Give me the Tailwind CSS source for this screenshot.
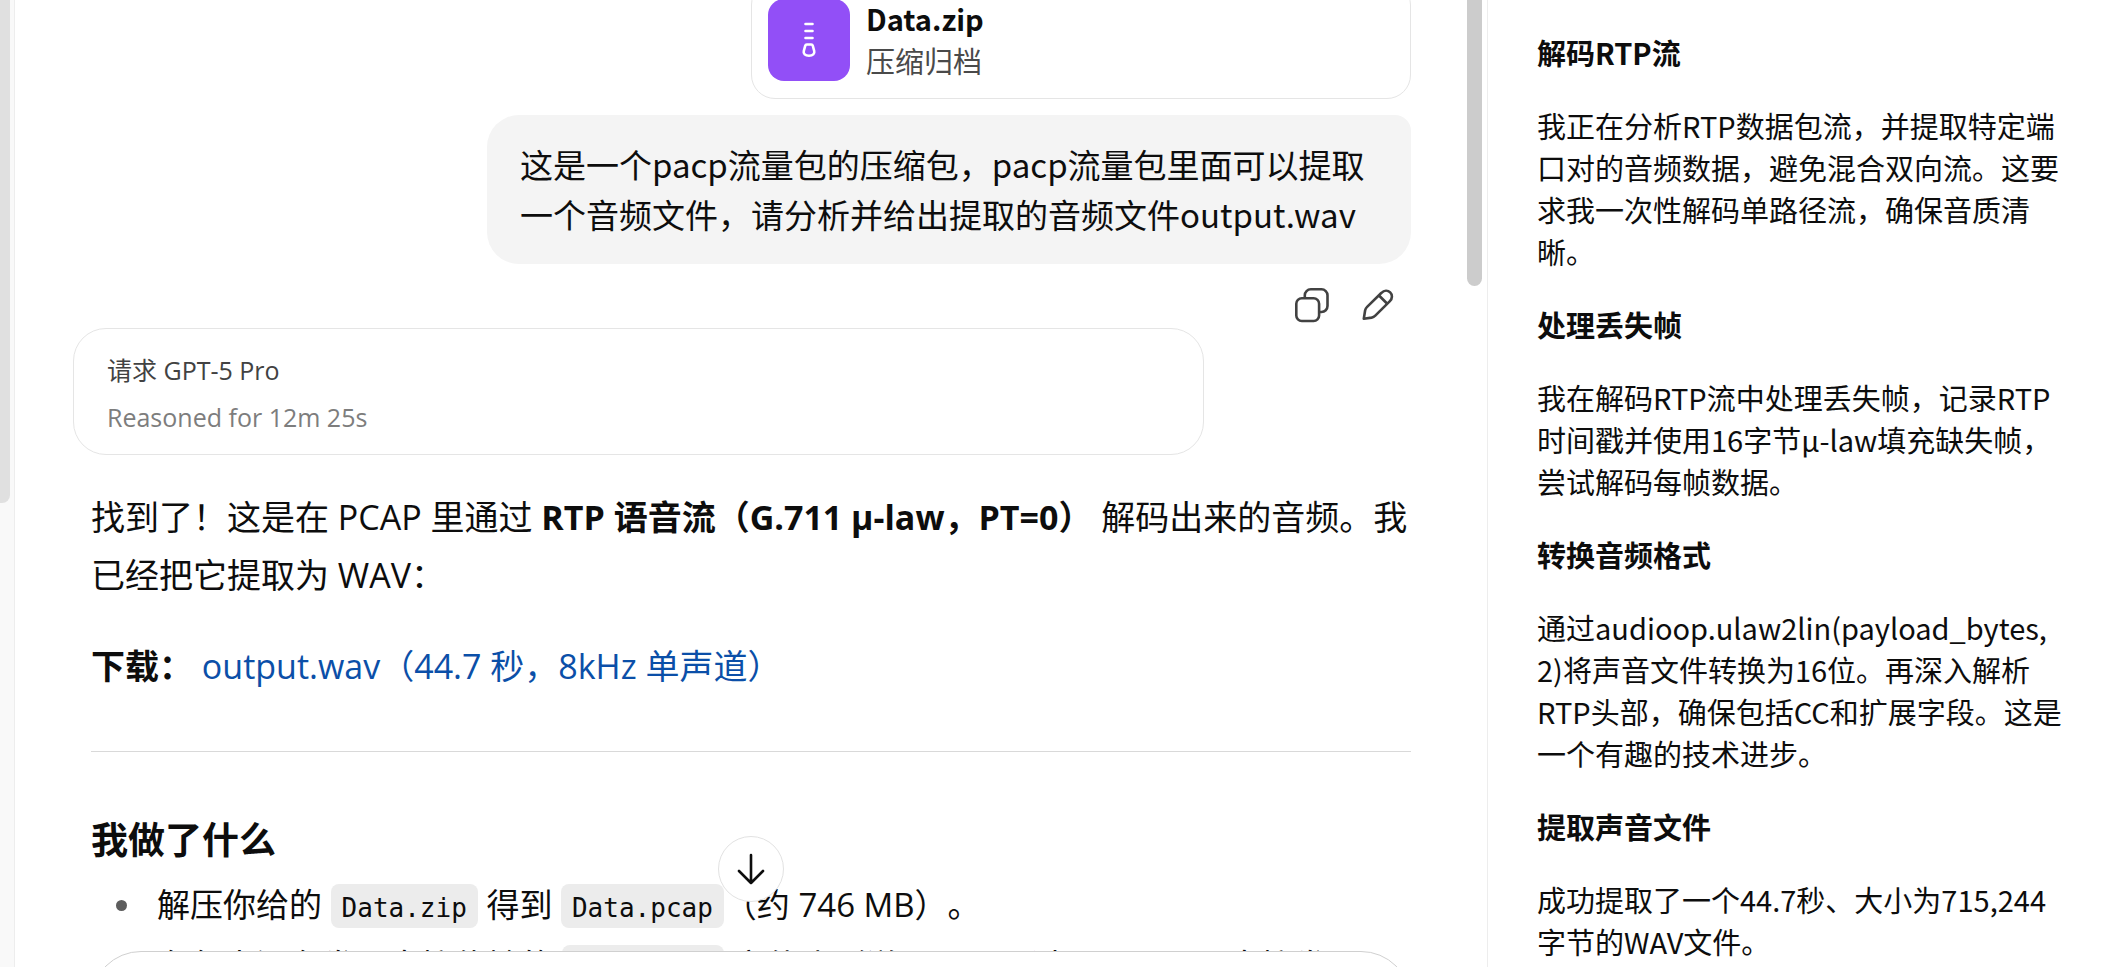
<!DOCTYPE html>
<html lang="zh-CN">
<head>
  <meta charset="UTF-8">
  <meta name="viewport" content="width=device-width, initial-scale=1">
  <title>RTP 音频提取</title>
  <script src="https://cdn.jsdelivr.net/npm/@tailwindcss/browser@4"></script>
</head>
<body class="h-screen overflow-hidden bg-white text-[#0d0d0d] font-['Noto_Sans_CJK_SC',sans-serif] [text-spacing-trim:space-all]">

  <div class="flex h-full">

    <!-- sidebar edge -->
    <div class="w-[15px] shrink-0 bg-[#f9f9f9] border-r border-[#ededed]">
      <div class="w-[10px] h-[503px] bg-[#e0e0e0] rounded-br-lg"></div>
    </div>

    <!-- conversation -->
    <main class="relative flex-1 min-w-0 flex overflow-hidden">
      <div class="flex-1 min-w-0 pl-[76px] pr-14 -mt-[19px]">

        <div class="flex flex-col items-end">
          <div class="flex items-center gap-4 w-1/2 h-[118px] px-4 border border-[#e5e5e5] rounded-3xl">
            <div class="w-[82px] h-[82px] shrink-0 rounded-2xl bg-[#924ff7] flex items-center justify-center">
              <svg class="w-10 h-10" viewBox="0 0 40 40" fill="none" stroke="white" stroke-width="2.6" stroke-linecap="round">
                <path d="M16.5 4h7M16.5 11h7M16.5 18h7"/>
                <path d="M17.8 24.500h4.400c.8 0 1.400.5 1.600 1.300l1.400 5.200c.7 2.700-1.300 4.800-5.200 4.800s-5.900-2.100-5.200-4.800l1.400-5.200c.2-.8.8-1.300 1.600-1.300z"/>
              </svg>
            </div>
            <div class="pb-[3px] text-[29px] leading-[42px]">
              <div class="font-bold">Data.zip</div>
              <div class="text-[#4a4a4a]">压缩归档</div>
            </div>
          </div>

          <div class="mt-4 w-[70%] pt-6 pb-[25px] px-[33px] bg-[#f4f4f4] rounded-[32px] rounded-tr-2xl text-[33px] leading-[50px]">
            这是一个pacp流量包的压缩包，pacp流量包里面可以提取一个音频文件，请分析并给出提取的音频文件output.wav
          </div>

          <div class="flex mt-[18px] text-[#424242]">
            <button type="button" aria-label="复制" class="w-[66px] h-[46px] flex items-center justify-center">
              <svg class="w-10 h-10" viewBox="0 0 40 40" fill="none" stroke="currentColor" stroke-width="2.6" stroke-linejoin="round">
                <rect x="4.3" y="13.2" width="22.800" height="22.800" rx="5.500"/>
                <path d="M12.800 13v-2.700a6 6 0 0 1 6-6h10.700a6 6 0 0 1 6 6v10.700a6 6 0 0 1-6 6h-2.300"/>
              </svg>
            </button>
            <button type="button" aria-label="编辑" class="w-[66px] h-[46px] flex items-center justify-center">
              <svg class="w-10 h-10" viewBox="0 0 40 40" fill="none" stroke="currentColor" stroke-width="2.6" stroke-linejoin="round">
                <path d="M23.500 7.800c2.600-2.600 6.300-2.700 8.700-.4s2.300 6.100-.3 8.700L17.300 30.600a7 7 0 0 1-3.700 2L5.800 33.800l1.300-8.300a7 7 0 0 1 2-3.600z"/>
                <path d="M21 10.500l8.500 8.500"/>
              </svg>
            </button>
          </div>
        </div>

        <div class="-ml-[18px] mr-[207px] h-[127px] pt-[18px] px-[33px] border border-[#e5e5e5] rounded-[33px] font-['Open_Sans','Noto_Sans_CJK_SC',sans-serif] text-[25px]">
          <div class="text-[#424242] leading-[47px]">请求 GPT-5 Pro</div>
          <div class="text-[#7d7d7d] leading-[47px]">Reasoned for 12m 25s</div>
        </div>

        <article class="mt-[33px] font-['Open_Sans','Noto_Sans_CJK_SC',sans-serif] text-[33px] leading-[58px]">
          <p class="text-[34px] leading-[58px]">找到了！这是在 PCAP 里通过 <strong>RTP 语音流（G.711 µ-law，PT=0）</strong> 解码出来的音频。我已经把它提取为 WAV：</p>
          <p class="mt-[33px] text-[34px] leading-[58px]"><strong>下载：</strong> <a href="#" class="text-[#0b4fa8]">output.wav（44.7 秒，8kHz 单声道）</a></p>
          <hr class="mt-14 border-[#d9d9d9]">
          <h2 class="mt-[65px] text-[37px] leading-[46px] font-bold">我做了什么</h2>
          <ul class="mt-[13px] pl-[66px]">
            <li class="relative">
              <span class="absolute -left-[41px] top-6 size-[11px] rounded-full bg-[#5d5d5d]"></span>
              解压你给的 <code class="px-[11px] pt-[9px] pb-[5px] bg-[#ececec] rounded-lg font-['DejaVu_Sans_Mono',monospace] text-[26px]">Data.zip</code> 得到 <code class="px-[11px] pt-[9px] pb-[5px] bg-[#ececec] rounded-lg font-['DejaVu_Sans_Mono',monospace] text-[26px]">Data.pcap</code>（约 746 MB）。
            </li>
            <li class="relative whitespace-nowrap">
              <span class="absolute -left-[41px] top-6 size-[11px] rounded-full bg-[#5d5d5d]"></span>
              在包中没有发现直接传输的 <code class="px-[11px] pt-[9px] pb-[5px] bg-[#ececec] rounded-lg font-['DejaVu_Sans_Mono',monospace] text-[26px]">RIFF/WAVE</code> 文件头（说明不是通过 HTTP/FTP 直接发
            </li>
          </ul>
        </article>
      </div>

      <!-- scrollbar -->
      <div class="w-5 shrink-0">
        <div class="w-[15px] h-[286px] bg-[#ccc] rounded-b-full"></div>
      </div>

      <button type="button" aria-label="滚动到底部" class="absolute left-[703px] bottom-[65px] size-[66px] rounded-full border border-[#e2e2e2] bg-white flex items-center justify-center">
        <svg class="w-10 h-10" viewBox="0 0 40 40" fill="none" stroke="currentColor" stroke-width="2.6" stroke-linecap="round" stroke-linejoin="round">
          <path d="M20 6v28M8 22L20 34l12-12"/>
        </svg>
      </button>

      <!-- composer, mostly below the fold -->
      <form class="absolute left-[76px] right-[76px] top-full -mt-4">
        <textarea aria-label="询问任何问题" class="block w-full h-28 px-8 resize-none border border-[#d0d0d0] rounded-[50px] bg-white outline-none"></textarea>
      </form>
    </main>

    <!-- reasoning panel -->
    <aside class="w-[626px] shrink-0 pt-[31px] pl-[49px] pr-[50px] border-l border-[#ededed] text-[29px] leading-[42px] overflow-hidden">
      <div class="flex flex-col gap-[31px]">
        <h3 class="font-bold">解码RTP流</h3>
        <p>我正在分析RTP数据包流，并提取特定端口对的音频数据，避免混合双向流。这要求我一次性解码单路径流，确保音质清晰。</p>
        <h3 class="font-bold">处理丢失帧</h3>
        <p>我在解码RTP流中处理丢失帧，记录RTP时间戳并使用16字节µ-law填充缺失帧，尝试解码每帧数据。</p>
        <h3 class="font-bold">转换音频格式</h3>
        <p>通过audioop.ulaw2lin(payload_bytes, 2)将声音文件转换为16位。再深入解析RTP头部，确保包括CC和扩展字段。这是一个有趣的技术进步。</p>
        <h3 class="font-bold">提取声音文件</h3>
        <p>成功提取了一个44.7秒、大小为715,244字节的WAV文件。</p>
      </div>
    </aside>

  </div>

</body>
</html>
